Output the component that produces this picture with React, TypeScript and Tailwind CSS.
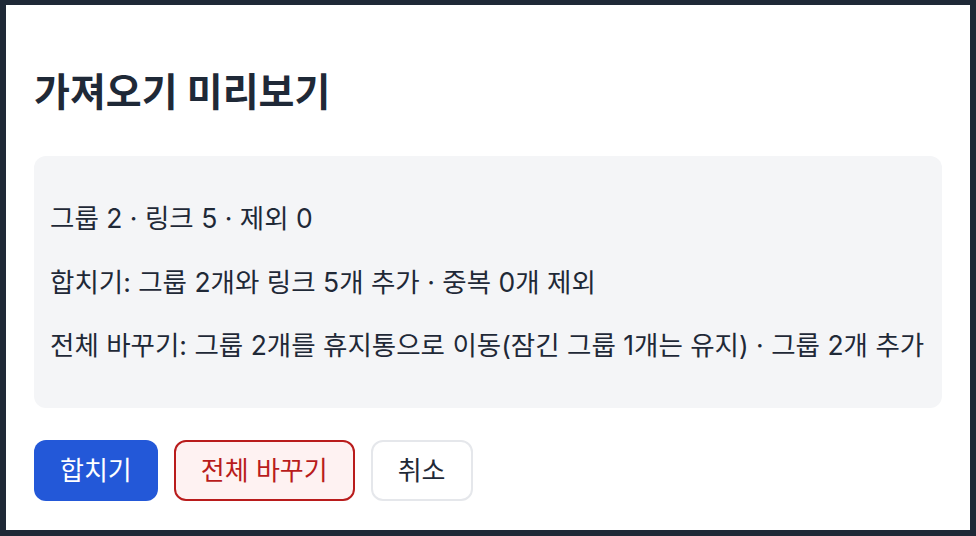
import React from 'react';

const App = () => {
  const lines = [
    '그룹 2 · 링크 5 · 제외 0',
    '합치기: 그룹 2개와 링크 5개 추가 · 중복 0개 제외',
    '전체 바꾸기: 그룹 2개를 휴지통으로 이동(잠긴 그룹 1개는 유지) · 그룹 2개 추가',
  ];

  return (
    <div
      className="w-full h-screen bg-[#1f2937] pt-[5px] pl-[6px]"
      style={{ fontFamily: 'Inter, "Noto Sans CJK KR", sans-serif' }}
    >
      <div className="w-[964px] h-[525px] bg-white px-[28px] pt-[64px]">
        {/* Title */}
        <h1 className="text-[39px] leading-[46px] font-bold text-[#1f2937]">가져오기 미리보기</h1>

        {/* Summary */}
        <div className="mt-[41px] rounded-xl bg-[#f4f5f7] px-[16px] pt-[46px] pb-[47px] flex flex-col gap-[31.5px]">
          {lines.map(line => (
            <p key={line} className="text-[26.5px] leading-[32px] text-[#1f2937]">
              {line}
            </p>
          ))}
        </div>

        {/* Actions */}
        <div className="mt-[32px] flex items-center gap-[16px]">
          <button className="h-[61px] px-[26px] rounded-xl bg-[#2358d8] text-white text-[26px]">합치기</button>
          <button className="h-[61px] px-[25px] rounded-xl bg-[#fef2f2] border-2 border-[#b91c1c] text-[#b91c1c] text-[26px]">
            전체 바꾸기
          </button>
          <button className="h-[61px] px-[25px] rounded-xl bg-white border-2 border-[#e5e7eb] text-[#1f2937] text-[26px]">
            취소
          </button>
        </div>
      </div>
    </div>
  );
};

export default App;
